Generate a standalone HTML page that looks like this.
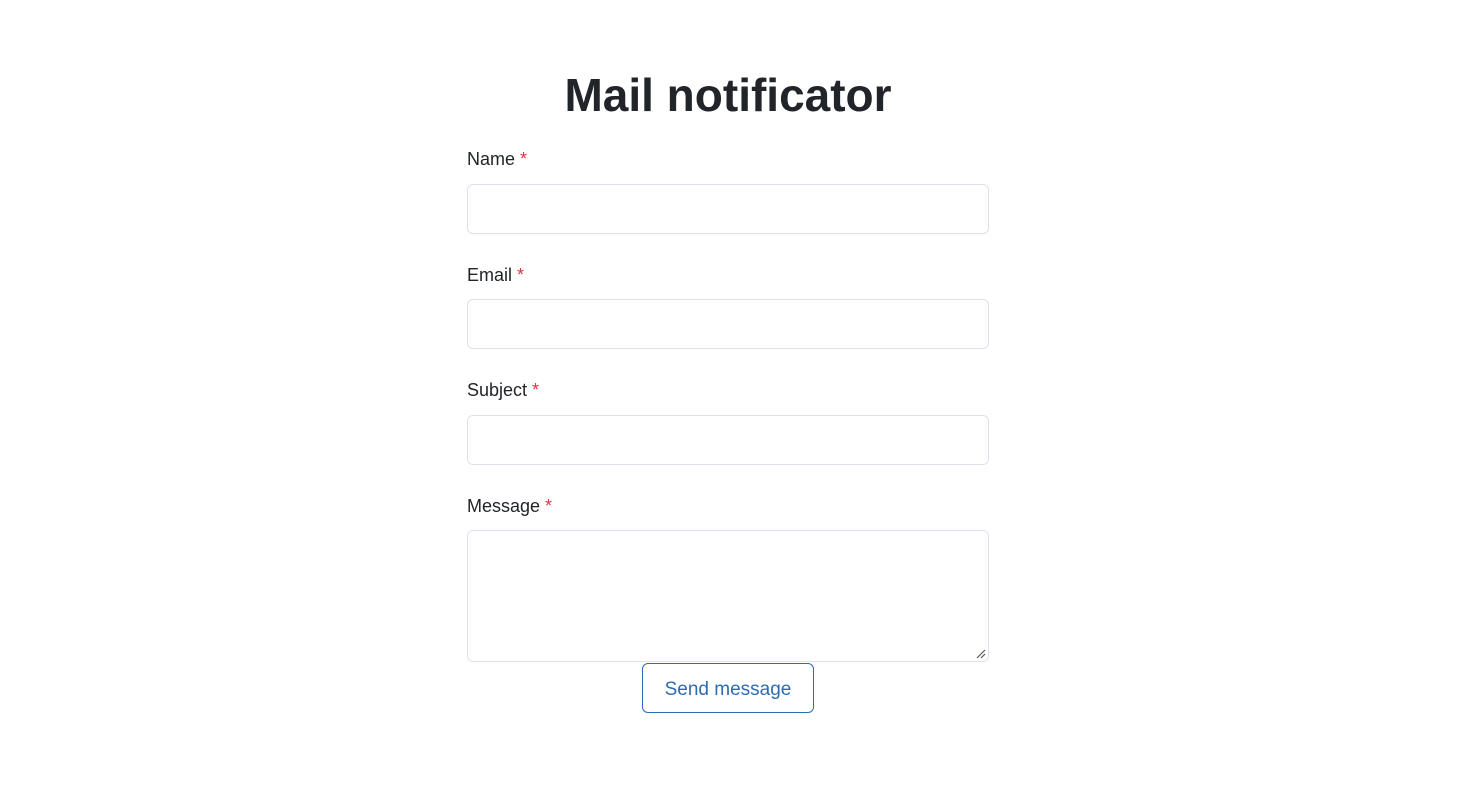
<!DOCTYPE html>
<html><head><style>
body{margin:0;background:#fff;font-family:"Liberation Sans",sans-serif;color:#212529;}
.a{position:absolute}
h1{position:absolute;left:0;width:1456px;top:67px;margin:0;text-align:center;font-size:46px;font-weight:bold;line-height:56px;}
.l{position:absolute;left:467px;font-size:18px;line-height:24px;}
.l span{color:#dc3545}
.i{position:absolute;left:467px;width:520px;height:48px;border:1px solid #dde2ec;border-radius:6px;background:#fff}
.btn{position:absolute;left:642px;top:663px;width:170px;height:48px;border:1px solid #2f6bb0;border-radius:6px;color:#2f6bb0;font-size:19px;line-height:52px;text-align:center}
</style></head><body>
<h1>Mail notificator</h1>
<div class="l" style="top:147px">Name <span>*</span></div>
<div class="i" style="top:184px"></div>
<div class="l" style="top:263px">Email <span>*</span></div>
<div class="i" style="top:299px"></div>
<div class="l" style="top:378px">Subject <span>*</span></div>
<div class="i" style="top:415px"></div>
<div class="l" style="top:494px">Message <span>*</span></div>
<div class="i" style="top:530px;height:130px"></div>
<svg class="a" style="left:976px;top:649px" width="10" height="10"><path d="M1 9L9 1M5 9L9 5" stroke="#555" stroke-width="1.2"/></svg>
<div class="btn">Send message</div>
</body></html>
